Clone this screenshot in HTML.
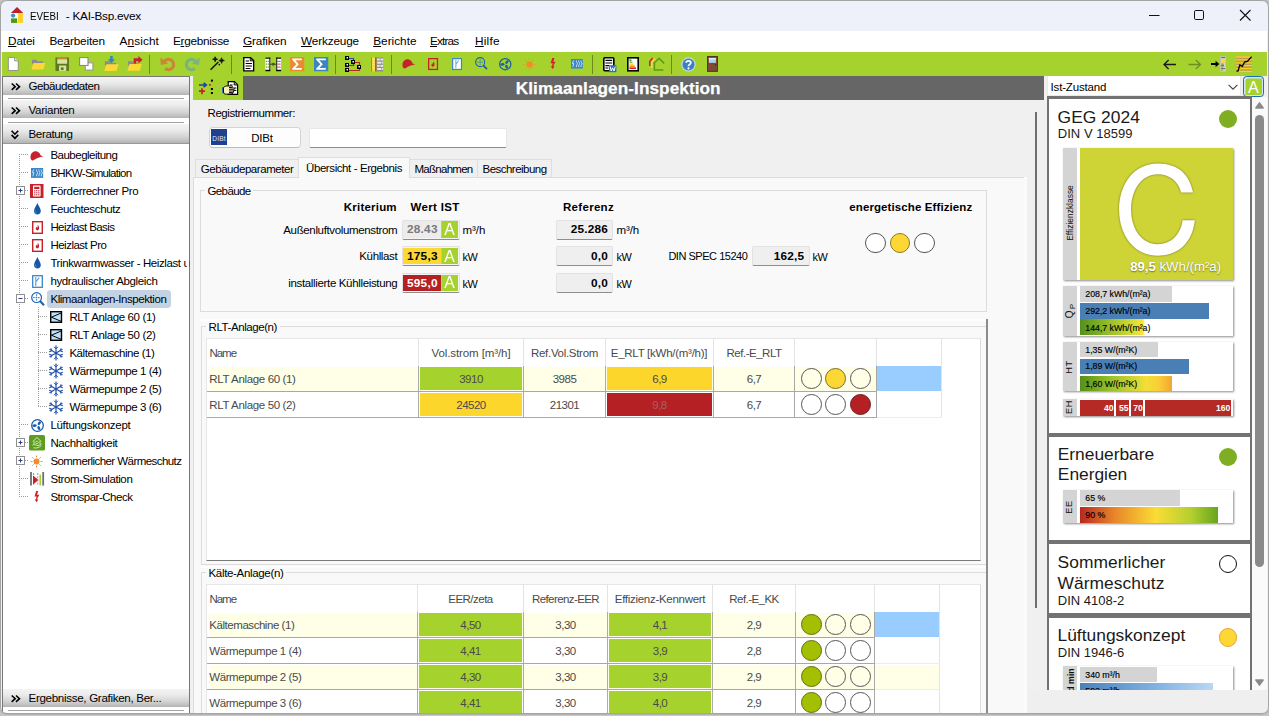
<!DOCTYPE html>
<html><head><meta charset="utf-8"><title>EVEBI - KAI-Bsp.evex</title>
<style>
*{box-sizing:border-box;margin:0;padding:0}
html,body{width:1269px;height:716px;overflow:hidden;background:#f0f0f0}
body{font-family:"Liberation Sans",sans-serif;font-size:11.5px;color:#000;position:relative}
.a{position:absolute}
.t{position:absolute;white-space:nowrap}
svg{overflow:visible}
</style></head>
<body>
<div class="a" style="left:0px;top:0px;width:1269px;height:31px;background:#eef1f9;"></div>
<svg class="a" style="left:0px;top:0px" width="30" height="30" viewBox="0 0 30 30"><path d="M10.9 13.1 L17.05 6.9 L23.2 13.1 Z" fill="#bf1f26"/><rect x="11" y="13" width="7" height="5.6" fill="#fff"/><rect x="18" y="13.1" width="5.1" height="9.8" fill="#fdd52a"/><rect x="11" y="18.4" width="6.1" height="4.5" fill="#4f9a0c"/><circle cx="13.1" cy="15.6" r="2.15" fill="#3f8dcc"/></svg>
<div class="t" style="left:30.40px;top:8.80px;font-size:11.8px;letter-spacing:0.000px;line-height:14px;height:14px;transform:scaleX(0.828);transform-origin:0 50%;">EVEBI</div>
<div class="t" style="left:65.80px;top:8.80px;font-size:11.8px;letter-spacing:-0.249px;line-height:14px;height:14px;">- KAI-Bsp.evex</div>
<svg class="a" style="left:1144px;top:5px" width="20" height="20" viewBox="0 0 20 20"><path d="M5 10.5 H15.5" stroke="#111" stroke-width="1" fill="none"/></svg>
<svg class="a" style="left:1189px;top:5px" width="20" height="20" viewBox="0 0 20 20"><rect x="5.5" y="5.5" width="9" height="9" rx="1.3" stroke="#111" stroke-width="1" fill="none"/></svg>
<svg class="a" style="left:1235px;top:5px" width="20" height="20" viewBox="0 0 20 20"><path d="M5 5 L15.5 15.5 M15.5 5 L5 15.5" stroke="#111" stroke-width="1.1" fill="none"/></svg>
<div class="a" style="left:0px;top:31px;width:1269px;height:21px;background:#fff;"></div>
<div class="t" style="left:8.00px;top:33.60px;font-size:11.8px;letter-spacing:-0.149px;line-height:14px;height:14px;"><span style="text-decoration:underline;text-underline-offset:0.6px;text-decoration-thickness:1px">D</span>atei</div>
<div class="t" style="left:49.40px;top:33.60px;font-size:11.8px;letter-spacing:-0.157px;line-height:14px;height:14px;">Be<span style="text-decoration:underline;text-underline-offset:0.6px;text-decoration-thickness:1px">a</span>rbeiten</div>
<div class="t" style="left:119.50px;top:33.60px;font-size:11.8px;letter-spacing:0.101px;line-height:14px;height:14px;">A<span style="text-decoration:underline;text-underline-offset:0.6px;text-decoration-thickness:1px">n</span>sicht</div>
<div class="t" style="left:173.00px;top:33.60px;font-size:11.8px;letter-spacing:-0.303px;line-height:14px;height:14px;">E<span style="text-decoration:underline;text-underline-offset:0.6px;text-decoration-thickness:1px">r</span>gebnisse</div>
<div class="t" style="left:243.00px;top:33.60px;font-size:11.8px;letter-spacing:-0.149px;line-height:14px;height:14px;"><span style="text-decoration:underline;text-underline-offset:0.6px;text-decoration-thickness:1px">G</span>rafiken</div>
<div class="t" style="left:301.00px;top:33.60px;font-size:11.8px;letter-spacing:-0.163px;line-height:14px;height:14px;"><span style="text-decoration:underline;text-underline-offset:0.6px;text-decoration-thickness:1px">W</span>erkzeuge</div>
<div class="t" style="left:373.20px;top:33.60px;font-size:11.8px;letter-spacing:0.002px;line-height:14px;height:14px;"><span style="text-decoration:underline;text-underline-offset:0.6px;text-decoration-thickness:1px">B</span>erichte</div>
<div class="t" style="left:430.00px;top:33.60px;font-size:11.8px;letter-spacing:-0.840px;line-height:14px;height:14px;"><span style="text-decoration:underline;text-underline-offset:0.6px;text-decoration-thickness:1px">E</span>xtras</div>
<div class="t" style="left:475.00px;top:33.60px;font-size:11.8px;letter-spacing:0.219px;line-height:14px;height:14px;"><span style="text-decoration:underline;text-underline-offset:0.6px;text-decoration-thickness:1px">H</span>ilfe</div>
<div class="a" style="left:2px;top:52px;width:1265px;height:24px;background:#a6d22e;"></div>
<div class="a" style="left:149px;top:55px;width:1px;height:19px;background:#6b8a1c;"></div>
<div class="a" style="left:231px;top:55px;width:1px;height:19px;background:#6b8a1c;"></div>
<div class="a" style="left:335px;top:55px;width:1px;height:19px;background:#6b8a1c;"></div>
<div class="a" style="left:391px;top:55px;width:1px;height:19px;background:#6b8a1c;"></div>
<div class="a" style="left:592px;top:55px;width:1px;height:19px;background:#6b8a1c;"></div>
<div class="a" style="left:671px;top:55px;width:1px;height:19px;background:#6b8a1c;"></div>
<svg class="a" style="left:7.3px;top:57px" width="16" height="16" viewBox="0 0 16 16"><g transform="scale(0.9,0.87)"><path d="M1.5 0.5 H8.5 L12.5 4.5 V15.5 H1.5 Z" fill="#fff" stroke="#8a8a8a" stroke-width="1"/><path d="M8.5 0.5 V4.5 H12.5" fill="#e8e8e8" stroke="#8a8a8a" stroke-width="1"/></g></svg>
<svg class="a" style="left:30.8px;top:57.2px" width="16" height="16" viewBox="0 0 16 16"><g transform="scale(0.92,0.92)"><path d="M1 3 H6 L7 4.5 H13 V8 H1 Z" fill="#8c8c8c"/><path d="M2.6 6.5 H15.6 L13.4 13.5 H0.4 Z" fill="#fdd835"/></g></svg>
<svg class="a" style="left:55px;top:57px" width="16" height="16" viewBox="0 0 16 16"><g transform="scale(0.9,0.9)"><rect x="0.5" y="0.5" width="15" height="15" fill="#5d7a22"/><rect x="2.5" y="0.5" width="11" height="2" fill="#c8873a"/><rect x="2.5" y="2.5" width="11" height="5" fill="#d5e59a"/><rect x="4.5" y="9.5" width="8" height="6" fill="#d5e59a"/><rect x="6.5" y="11.5" width="3" height="3" fill="#5d7a22"/></g></svg>
<svg class="a" style="left:79px;top:57px" width="16" height="16" viewBox="0 0 16 16"><g transform="scale(0.96,0.9)"><rect x="6.5" y="6.5" width="8" height="8" fill="#fff" stroke="#9a9a9a" stroke-width="1.2"/><rect x="0.6" y="0.6" width="8.8" height="8.8" fill="#fff" stroke="#8a8a8a" stroke-width="1.2"/></g></svg>
<svg class="a" style="left:104px;top:55.8px" width="16" height="16" viewBox="0 0 16 16"><g transform="scale(0.93,0.96)"><path d="M1 5.5 H6 L7 7 H13 V10 H1 Z" fill="#8c8c8c"/><path d="M2.6 8.5 H15.6 L13.4 15.5 H0.4 Z" fill="#fdd835"/><path d="M6.6 0 H9.4 V3.5 H11.8 L8 7.5 L4.2 3.5 H6.6 Z" fill="#2f86c8"/></g></svg>
<svg class="a" style="left:127.3px;top:56.2px" width="16" height="16" viewBox="0 0 16 16"><g transform="scale(0.95,0.95)"><path d="M1 5.5 H6 L7 7 H11 V10 H1 Z" fill="#8c8c8c"/><path d="M2.6 8.5 H15.6 L13.4 15.5 H0.4 Z" fill="#fdd835"/><path d="M7 2.4 H12 V0 L16.4 4 L12 8 V5.6 H9.5 V8 H7 Z" fill="#c5222b"/></g></svg>
<svg class="a" style="left:159.6px;top:55.4px" width="16" height="16" viewBox="0 0 16 16"><g transform="scale(1.0,1.0)"><path d="M3.6 7.6 A5.2 5.2 0 1 1 5.2 13.6" fill="none" stroke="#c8873a" stroke-width="3.2"/><path d="M0.3 2.6 L0.9 10 L8 8.6 Z" fill="#c8873a"/></g></svg>
<svg class="a" style="left:184.8px;top:55.4px" width="16" height="16" viewBox="0 0 16 16"><g transform="scale(1.0,1.0)"><path d="M11.4 7.6 A5.2 5.2 0 1 0 9.8 13.6" fill="none" stroke="#79b37e" stroke-width="3.2"/><path d="M14.7 2.6 L14.1 10 L7 8.6 Z" fill="#79b37e"/></g></svg>
<svg class="a" style="left:210px;top:56.2px" width="16" height="16" viewBox="0 0 16 16"><g transform="scale(0.95,0.95)"><path d="M0.6 14.6 L8.8 6.4" stroke="#111" stroke-width="1.5"/><path d="M5.4 0.7999999999999998 Q5.4 3.4 8.0 3.4 Q5.4 3.4 5.4 6.0 Q5.4 3.4 2.8000000000000003 3.4 Q5.4 3.4 5.4 0.7999999999999998 Z M12.2 1.9 Q12.2 4.8 15.1 4.8 Q12.2 4.8 12.2 7.699999999999999 Q12.2 4.8 9.299999999999999 4.8 Q12.2 4.8 12.2 1.9 Z" fill="#111" stroke="#111" stroke-width=".9" stroke-linejoin="round"/><circle cx="9.8" cy="9" r="0.9" fill="#111"/></g></svg>
<svg class="a" style="left:242.8px;top:56.7px" width="16" height="16" viewBox="0 0 16 16"><g transform="scale(0.95,0.89)"><path d="M0.8 0.8 H8 L11.2 4 V15.6 H0.8 Z" fill="#fff" stroke="#000" stroke-width="1.4"/><path d="M7.6 0.8 V4.4 H11.2 Z" fill="#777" stroke="#000" stroke-width=".8"/><path d="M2.8 4.6 H6.4 M2.8 7.4 H9.4 M2.8 10.2 H9.4 M2.8 13 H7.8" stroke="#000" stroke-width="1.1"/></g></svg>
<svg class="a" style="left:264.6px;top:56.6px" width="16" height="16" viewBox="0 0 16 16"><g transform="scale(0.96,0.88)"><rect x="0.4" y="0.6" width="5" height="15.4" fill="#fff"/><rect x="11.8" y="0.6" width="5" height="15.4" fill="#fff"/><path d="M0.4 1.3 H5.4 M0.4 15.3 H5.4 M11.8 1.3 H16.8 M11.8 15.3 H16.8" stroke="#000" stroke-width="1.6"/><path d="M5 0.6 V16 M12.2 0.6 V16" stroke="#000" stroke-width="1"/><path d="M1 5 H4.2 M1 8.2 H4.2 M1 11.4 H4.2" stroke="#6aa02c" stroke-width="1.4" stroke-dasharray="1.2 .7"/><path d="M13 5 H16.2 M13 8.2 H16.2 M13 11.4 H16.2" stroke="#c5222b" stroke-width="1.4" stroke-dasharray="1.2 .7"/><path d="M5.4 8.2 H11.8" stroke="#333" stroke-width="1"/><circle cx="8.6" cy="8.2" r="1.7" fill="#4a5a2a"/></g></svg>
<svg class="a" style="left:289.8px;top:56.7px" width="16" height="16" viewBox="0 0 16 16"><g transform="scale(0.92,0.92)"><rect x="0" y="0" width="15.5" height="15.5" fill="#ea8c2e"/><path d="M2.4 1.6 H12.8 V3.5 H5.8 L9.6 7.75 L5.8 12 H12.8 V13.9 H2.4 V12.5 L6.9 7.75 L2.4 3 Z" fill="#fff"/></g></svg>
<svg class="a" style="left:313.8px;top:56.7px" width="16" height="16" viewBox="0 0 16 16"><g transform="scale(0.92,0.92)"><rect x="0" y="0" width="15.5" height="15.5" fill="#3a86c4"/><path d="M2.4 1.6 H12.8 V3.5 H5.8 L9.6 7.75 L5.8 12 H12.8 V13.9 H2.4 V12.5 L6.9 7.75 L2.4 3 Z" fill="#fff"/></g></svg>
<svg class="a" style="left:345px;top:56px" width="16" height="16" viewBox="0 0 16 16"><g transform="scale(1,1)"><path d="M4 2.5 H8.5 V4 M4 9.5 H8.5 V8" fill="none" stroke="#1d4fa8" stroke-width="1.2"/><path d="M10 6.5 H14.5 V9 M4 14.5 H14.5 V13" fill="none" stroke="#c5222b" stroke-width="1.2"/><rect x="0" y="0" width="4" height="4" fill="#000"/><rect x="1.5" y="1" width="1.5" height="1.5" fill="#fff"/><rect x="6" y="4" width="4" height="4" fill="#000"/><rect x="7.5" y="5" width="1.5" height="1.5" fill="#fff"/><rect x="0" y="7" width="4" height="4" fill="#000"/><rect x="1.5" y="8" width="1.5" height="1.5" fill="#fff"/><rect x="12" y="9" width="4" height="4" fill="#000"/><rect x="13.5" y="10" width="1.5" height="1.5" fill="#fff"/><rect x="0" y="12" width="4" height="4" fill="#000"/><rect x="1.5" y="13" width="1.5" height="1.5" fill="#fff"/></g></svg>
<svg class="a" style="left:371px;top:56.7px" width="16" height="16" viewBox="0 0 16 16"><g transform="scale(0.87,0.93)"><rect x="0" y="0.5" width="1.3" height="15" fill="#8a8a8a"/><rect x="1.3" y="0.5" width="3.6" height="15" fill="#fdd835"/><path d="M1.3 2.5 H4.9 M1.3 5.5 H4.9 M1.3 8.5 H4.9 M1.3 11.5 H4.9" stroke="#f3ea9a" stroke-width="1"/><rect x="4.9" y="0.5" width="1.4" height="15" fill="#c5222b"/><rect x="6.3" y="0.5" width="7.7" height="15" fill="#8c8c8c"/><g fill="#e9e9e9"><rect x="7" y="1.6" width="3" height="2.2"/><rect x="10.8" y="1.6" width="3.2" height="2.2"/><rect x="7" y="5" width="5" height="2.2"/><rect x="12.8" y="5" width="1.2" height="2.2"/><rect x="7" y="8.4" width="3" height="2.2"/><rect x="10.8" y="8.4" width="3.2" height="2.2"/><rect x="7" y="11.8" width="5" height="2.2"/><rect x="12.8" y="11.8" width="1.2" height="2.2"/></g></g></svg>
<svg class="a" style="left:401.6px;top:57.6px" width="16" height="16" viewBox="0 0 16 16"><g transform="scale(0.83,0.83)"><path d="M0.6 9.2 C0.2 3.6 4.2 1 7.6 1.6 C10.8 2.2 12.2 4.6 12.6 6.6 L16 7.4 L11.8 8.6 C9 9.2 6.4 10.6 3.6 12.6 C1.8 12.6 0.8 11.2 0.6 9.2 Z" fill="#c5222b"/></g></svg>
<svg class="a" style="left:427.9px;top:57.8px" width="16" height="16" viewBox="0 0 16 16"><g transform="scale(0.92,0.93)"><rect x="0.7" y="0.7" width="9.6" height="11.6" fill="none" stroke="#c5222b" stroke-width="1.4"/><path d="M5.5 3.6 C7 5.2 7.4 6.4 7 7.8 C6.7 8.8 6.1 9.4 5.3 9.4 C4.1 9.4 3.5 8.3 3.8 7.1 C4 6.5 4.4 6.2 4.6 5.4 C5 5.9 5.2 6.3 5.2 6.9 C5.8 6.1 5.8 4.9 5.5 3.6 Z" fill="#c5222b"/></g></svg>
<svg class="a" style="left:452px;top:57.8px" width="16" height="16" viewBox="0 0 16 16"><g transform="scale(0.92,0.93)"><rect x="0.7" y="0.7" width="9.6" height="11.6" fill="#fff" stroke="#3a86c8" stroke-width="1.3"/><path d="M4.2 2 V11 M4.2 7 L7.2 2.6" fill="none" stroke="#6aa8dc" stroke-width="1.1"/></g></svg>
<svg class="a" style="left:474.8px;top:56.7px" width="16" height="16" viewBox="0 0 16 16"><g transform="scale(0.92,0.92)"><circle cx="5.6" cy="5.6" r="4.9" fill="none" stroke="#1d63b4" stroke-width="1.2"/><path d="M5.6 2.2 V9 M2.2 5.6 H9" stroke="#2f7ec4" stroke-width="1" stroke-dasharray="1.6 .8"/><path d="M9 9 L13 13.2" stroke="#1d5fb0" stroke-width="2"/></g></svg>
<svg class="a" style="left:498.6px;top:57.7px" width="16" height="16" viewBox="0 0 16 16"><g transform="scale(0.96,0.96)"><circle cx="6.5" cy="6.5" r="5.8" fill="none" stroke="#1a5cae" stroke-width="1.3"/><ellipse cx="9.4" cy="6.5" rx="2.1" ry="1.35" transform="rotate(-52 6.5 6.5)" fill="#1a5cae"/><ellipse cx="9.4" cy="6.5" rx="2.1" ry="1.35" transform="rotate(62 6.5 6.5)" fill="#1a5cae"/><ellipse cx="9.4" cy="6.5" rx="2.1" ry="1.35" transform="rotate(178 6.5 6.5)" fill="#1a5cae"/></g></svg>
<svg class="a" style="left:522.5px;top:58px" width="16" height="16" viewBox="0 0 16 16"><g transform="scale(1,1)"><circle cx="6.5" cy="6.5" r="3.2" fill="#f28c28"/><path d="M6.5 0.4 V2 M6.5 11 V12.6 M0.4 6.5 H2 M11 6.5 H12.6 M2.2 2.2 L3.3 3.3 M9.7 9.7 L10.8 10.8 M2.2 10.8 L3.3 9.7 M9.7 3.3 L10.8 2.2" stroke="#f28c28" stroke-width="1.1" stroke-dasharray="1 .5"/></g></svg>
<svg class="a" style="left:549.8px;top:58px" width="16" height="16" viewBox="0 0 16 16"><g transform="scale(0.9,0.87)"><path d="M2.6 0 L5 0 L3.6 4.2 L6.2 4.2 L3.4 9.4 L5.2 9.4 L3 12.6 L0.8 9.4 L2.2 9.4 L3 6 L0.6 6 Z" fill="#d0202a"/></g></svg>
<svg class="a" style="left:571px;top:59.2px" width="16" height="16" viewBox="0 0 16 16"><g transform="scale(0.875,0.87)"><rect x="0" y="0" width="13.5" height="11" fill="#3b86c6"/><path d="M3 1.6 L1.6 5.2 H3.2 L2 9.2 M6.2 1.6 V3 C6.2 4.2 7.4 4.2 7.4 5.4 C7.4 6.6 6.2 6.6 6.2 7.8 V9.2 M8.8 1.6 V3 C8.8 4.2 10 4.2 10 5.4 C10 6.6 8.8 6.6 8.8 7.8 V9.2 M11.4 1.6 V3 C11.4 4.2 12.6 4.2 12.6 5.4 C12.6 6.6 11.4 6.6 11.4 7.8 V9.2" fill="none" stroke="#dbeaf7" stroke-width="1"/></g></svg>
<svg class="a" style="left:603px;top:57px" width="16" height="16" viewBox="0 0 16 16"><g transform="scale(1,1)"><rect x="0.8" y="0.8" width="10" height="13" rx="1" fill="#fff" stroke="#000" stroke-width="1.6"/><path d="M2.4 3.4 H9.2 M2.4 6 H9.2 M2.4 8.6 H6 M2.4 11 H5.4" stroke="#000" stroke-width="1.1"/><rect x="6" y="8.2" width="7.4" height="7" fill="#2f6fc0"/><path d="M7.2 9.6 L8.2 14 L9.6 10.8 L11 14 L12.2 9.6" fill="none" stroke="#fff" stroke-width="1"/></g></svg>
<svg class="a" style="left:626.5px;top:57px" width="16" height="16" viewBox="0 0 16 16"><g transform="scale(1,1)"><rect x="0.8" y="0.8" width="10.4" height="13" fill="#fff" stroke="#000" stroke-width="1.6"/><path d="M2.4 3.2 H4.4" stroke="#3a9a3a" stroke-width="1.6"/><path d="M2.4 5.2 H5.4" stroke="#7cc03c" stroke-width="1.6"/><path d="M2.4 7.2 H6.6" stroke="#fdd835" stroke-width="1.6"/><path d="M2.4 9.2 H7.8" stroke="#f28c28" stroke-width="1.6"/><path d="M2.4 11.2 H9" stroke="#d0202a" stroke-width="1.6"/></g></svg>
<svg class="a" style="left:648.5px;top:57px" width="16" height="16" viewBox="0 0 16 16"><g transform="scale(1,1)"><path d="M3.6 1 L0.8 4.4 V9" fill="none" stroke="#d0202a" stroke-width="1.5"/><path d="M6 1.6 L2.8 5.2 V11" fill="none" stroke="#fdd835" stroke-width="1.6"/><path d="M4.4 6.8 L10 1.2 L15.2 6.4 M5.4 6 V13 H14.4" fill="none" stroke="#5a9a1c" stroke-width="1.5"/></g></svg>
<svg class="a" style="left:681px;top:56.5px" width="16" height="16" viewBox="0 0 16 16"><g transform="scale(1,1)"><circle cx="7.5" cy="7.5" r="7.2" fill="#c9d6e4"/><circle cx="7.5" cy="7.5" r="6" fill="#3a80c2"/><path d="M5.2 5.8 C5.2 3.2 9.8 3.2 9.8 5.8 C9.8 7.4 7.5 7.4 7.5 9.2" fill="none" stroke="#fff" stroke-width="1.8"/><circle cx="7.5" cy="11.4" r="1.1" fill="#fff"/></g></svg>
<svg class="a" style="left:706.8px;top:56px" width="16" height="16" viewBox="0 0 16 16"><g transform="scale(0.94,0.98)"><rect x="0" y="0" width="11.5" height="16" fill="#7d4a38"/><rect x="0.4" y="0.4" width="10.7" height="15.2" fill="none" stroke="#4a2a20" stroke-width=".8"/><rect x="2" y="2" width="7.5" height="5" fill="#a8d4f0"/><rect x="2" y="2" width="7.5" height="1.6" fill="#d9ecf9"/><path d="M8.4 9 H10" stroke="#222" stroke-width="1"/></g></svg>
<svg class="a" style="left:1162.5px;top:58.5px" width="16" height="16" viewBox="0 0 16 16"><g transform="scale(1,1)"><path d="M13 5.5 H1.4 M5.6 1 L1 5.5 L5.6 10" fill="none" stroke="#1a1a1a" stroke-width="1.3"/></g></svg>
<svg class="a" style="left:1187.5px;top:58.5px" width="16" height="16" viewBox="0 0 16 16"><g transform="scale(1,1)"><path d="M0.5 5.5 H12.1 M7.9 1 L12.5 5.5 L7.9 10" fill="none" stroke="#6d8f22" stroke-width="1.3"/></g></svg>
<svg class="a" style="left:1211px;top:56px" width="16" height="16" viewBox="0 0 16 16"><g transform="scale(1,1)"><path d="M0 7 H4.6 V4.8 L8.2 8 L4.6 11.2 V9 H0 Z" fill="#000"/><rect x="9.4" y="0.4" width="5.4" height="15.2" fill="#d4d4d4" stroke="#bdbdbd" stroke-width=".6"/><path d="M10.2 1.6 H14" stroke="#444" stroke-width=".8"/><rect x="10.1" y="3" width="4" height="3.6" fill="#fdd835"/><rect x="10.1" y="7.4" width="2.8" height="1.6" fill="#7cc03c"/><rect x="10.1" y="9.2" width="2.8" height="1.2" fill="#d0202a"/><rect x="10.1" y="10.6" width="2" height="1.2" fill="#7cc03c"/><path d="M10.2 12.6 H14" stroke="#444" stroke-width=".8"/><rect x="10.1" y="13.4" width="2" height="1.4" fill="#7cc03c"/></g></svg>
<svg class="a" style="left:1236px;top:56px" width="16" height="16" viewBox="0 0 16 16"><g transform="scale(1,1)"><rect x="0" y="0" width="16" height="16" fill="#b59e58"/><path d="M0 1 H16 M0 3.9 H16 M0 6.8 H16 M0 9.7 H16 M0 12.6 H16 M0 15.3 H16" stroke="#fdd218" stroke-width="1.3"/><path d="M0.4 15.2 H2 L3.8 9 L6.4 10.4 L8.6 6 L11.6 5.2 L15.6 0.6" fill="none" stroke="#000" stroke-width="1.3"/></g></svg>
<div class="a" style="left:1267px;top:31px;width:2px;height:685px;background:#f2f2f2;"></div>
<div class="a" style="left:2px;top:76px;width:188px;height:637.5px;background:#fff;border:1px solid #787878;"></div>
<div class="a" style="left:3px;top:77px;width:186px;height:17.6px;background:linear-gradient(#f4f4f4 0%,#ececec 30%,#d2d2d2 70%,#b4b4b4 100%);"></div>
<svg class="a" style="left:10.8px;top:82.9px" width="9.5" height="8" viewBox="0 0 9.5 8"><path d="M0.7 0.5 L4.2 3.7 L0.7 6.9 M5 0.5 L8.5 3.7 L5 6.9" fill="none" stroke="#000" stroke-width="1.6"/></svg>
<div class="t" style="left:28.50px;top:79.20px;font-size:11.6px;letter-spacing:-0.479px;line-height:14px;height:14px;">Gebäudedaten</div>
<div class="a" style="left:8px;top:98px;width:176px;height:1px;background:#a2a2a2;"></div>
<div class="a" style="left:3px;top:100.4px;width:186px;height:18px;background:linear-gradient(#f4f4f4 0%,#ececec 30%,#d2d2d2 70%,#b4b4b4 100%);"></div>
<svg class="a" style="left:10.8px;top:106.9px" width="9.5" height="8" viewBox="0 0 9.5 8"><path d="M0.7 0.5 L4.2 3.7 L0.7 6.9 M5 0.5 L8.5 3.7 L5 6.9" fill="none" stroke="#000" stroke-width="1.6"/></svg>
<div class="t" style="left:28.50px;top:103.20px;font-size:11.6px;letter-spacing:-0.310px;line-height:14px;height:14px;">Varianten</div>
<div class="a" style="left:8px;top:122px;width:176px;height:1px;background:#a2a2a2;"></div>
<div class="a" style="left:3px;top:124.4px;width:186px;height:19px;background:linear-gradient(#f4f4f4 0%,#ececec 30%,#d2d2d2 70%,#b4b4b4 100%);"></div>
<svg class="a" style="left:11.3px;top:130.0px" width="8" height="9.5" viewBox="0 0 8 9.5"><path d="M0.6 0.7 L3.9 4.2 L7.2 0.7 M0.6 4.9 L3.9 8.4 L7.2 4.9" fill="none" stroke="#000" stroke-width="1.6"/></svg>
<div class="t" style="left:28.50px;top:127.20px;font-size:11.6px;letter-spacing:-0.385px;line-height:14px;height:14px;">Beratung</div>
<div class="a" style="left:3px;top:143px;width:186px;height:1px;background:#989898;"></div>
<div class="a" style="left:3px;top:688.6px;width:186px;height:18.4px;background:linear-gradient(#f4f4f4 0%,#ececec 30%,#d2d2d2 70%,#b4b4b4 100%);"></div>
<svg class="a" style="left:10.8px;top:694.7px" width="9.5" height="8" viewBox="0 0 9.5 8"><path d="M0.7 0.5 L4.2 3.7 L0.7 6.9 M5 0.5 L8.5 3.7 L5 6.9" fill="none" stroke="#000" stroke-width="1.6"/></svg>
<div class="t" style="left:28.50px;top:691.00px;font-size:11.6px;letter-spacing:-0.316px;line-height:14px;height:14px;">Ergebnisse, Grafiken, Ber...</div>
<div class="a" style="left:8px;top:710px;width:176px;height:1px;background:#a2a2a2;"></div>
<div class="a" style="left:47px;top:290px;width:124px;height:18px;background:#c4d3e3;border-radius:3.5px;"></div>
<div class="a" style="left:19px;top:154px;width:1px;height:343px;background:repeating-linear-gradient(180deg,#9a9a9a 0 1px,transparent 1px 2px);"></div>
<div class="a" style="left:19px;top:154px;width:10px;height:1px;background:repeating-linear-gradient(90deg,#9a9a9a 0 1px,transparent 1px 2px);"></div>
<div class="a" style="left:19px;top:172px;width:10px;height:1px;background:repeating-linear-gradient(90deg,#9a9a9a 0 1px,transparent 1px 2px);"></div>
<div class="a" style="left:19px;top:190px;width:10px;height:1px;background:repeating-linear-gradient(90deg,#9a9a9a 0 1px,transparent 1px 2px);"></div>
<div class="a" style="left:19px;top:208px;width:10px;height:1px;background:repeating-linear-gradient(90deg,#9a9a9a 0 1px,transparent 1px 2px);"></div>
<div class="a" style="left:19px;top:226px;width:10px;height:1px;background:repeating-linear-gradient(90deg,#9a9a9a 0 1px,transparent 1px 2px);"></div>
<div class="a" style="left:19px;top:244px;width:10px;height:1px;background:repeating-linear-gradient(90deg,#9a9a9a 0 1px,transparent 1px 2px);"></div>
<div class="a" style="left:19px;top:262px;width:10px;height:1px;background:repeating-linear-gradient(90deg,#9a9a9a 0 1px,transparent 1px 2px);"></div>
<div class="a" style="left:19px;top:280px;width:10px;height:1px;background:repeating-linear-gradient(90deg,#9a9a9a 0 1px,transparent 1px 2px);"></div>
<div class="a" style="left:19px;top:298px;width:10px;height:1px;background:repeating-linear-gradient(90deg,#9a9a9a 0 1px,transparent 1px 2px);"></div>
<div class="a" style="left:38px;top:316px;width:10px;height:1px;background:repeating-linear-gradient(90deg,#9a9a9a 0 1px,transparent 1px 2px);"></div>
<div class="a" style="left:38px;top:334px;width:10px;height:1px;background:repeating-linear-gradient(90deg,#9a9a9a 0 1px,transparent 1px 2px);"></div>
<div class="a" style="left:38px;top:352px;width:10px;height:1px;background:repeating-linear-gradient(90deg,#9a9a9a 0 1px,transparent 1px 2px);"></div>
<div class="a" style="left:38px;top:370px;width:10px;height:1px;background:repeating-linear-gradient(90deg,#9a9a9a 0 1px,transparent 1px 2px);"></div>
<div class="a" style="left:38px;top:388px;width:10px;height:1px;background:repeating-linear-gradient(90deg,#9a9a9a 0 1px,transparent 1px 2px);"></div>
<div class="a" style="left:38px;top:406px;width:10px;height:1px;background:repeating-linear-gradient(90deg,#9a9a9a 0 1px,transparent 1px 2px);"></div>
<div class="a" style="left:19px;top:424px;width:10px;height:1px;background:repeating-linear-gradient(90deg,#9a9a9a 0 1px,transparent 1px 2px);"></div>
<div class="a" style="left:19px;top:442px;width:10px;height:1px;background:repeating-linear-gradient(90deg,#9a9a9a 0 1px,transparent 1px 2px);"></div>
<div class="a" style="left:19px;top:460px;width:10px;height:1px;background:repeating-linear-gradient(90deg,#9a9a9a 0 1px,transparent 1px 2px);"></div>
<div class="a" style="left:19px;top:478px;width:10px;height:1px;background:repeating-linear-gradient(90deg,#9a9a9a 0 1px,transparent 1px 2px);"></div>
<div class="a" style="left:19px;top:496px;width:10px;height:1px;background:repeating-linear-gradient(90deg,#9a9a9a 0 1px,transparent 1px 2px);"></div>
<div class="a" style="left:38px;top:307px;width:1px;height:100px;background:repeating-linear-gradient(180deg,#9a9a9a 0 1px,transparent 1px 2px);"></div>
<svg class="a" style="left:29.6px;top:149.6px" width="16" height="16" viewBox="0 0 16 16"><g transform="scale(0.84)"><path d="M0.6 9.2 C0.2 3.6 4.2 1 7.6 1.6 C10.8 2.2 12.2 4.6 12.6 6.6 L16 7.4 L11.8 8.6 C9 9.2 6.4 10.6 3.6 12.6 C1.8 12.6 0.8 11.2 0.6 9.2 Z" fill="#c5222b"/></g></svg>
<div class="t" style="left:50.40px;top:148.30px;font-size:11.5px;letter-spacing:-0.502px;line-height:14px;height:14px;">Baubegleitung</div>
<svg class="a" style="left:31px;top:167.5px" width="16" height="16" viewBox="0 0 16 16"><g transform="scale(0.9)"><rect x="0" y="0" width="13.5" height="11" fill="#3b86c6"/><path d="M3 1.6 L1.6 5.2 H3.2 L2 9.2 M6.2 1.6 V3 C6.2 4.2 7.4 4.2 7.4 5.4 C7.4 6.6 6.2 6.6 6.2 7.8 V9.2 M8.8 1.6 V3 C8.8 4.2 10 4.2 10 5.4 C10 6.6 8.8 6.6 8.8 7.8 V9.2 M11.4 1.6 V3 C11.4 4.2 12.6 4.2 12.6 5.4 C12.6 6.6 11.4 6.6 11.4 7.8 V9.2" fill="none" stroke="#dbeaf7" stroke-width="1"/></g></svg>
<div class="t" style="left:50.40px;top:166.30px;font-size:11.5px;letter-spacing:-0.721px;line-height:14px;height:14px;">BHKW-Simulation</div>
<svg class="a" style="left:29.5px;top:184px" width="16" height="16" viewBox="0 0 16 16"><rect x="0" y="0" width="13.5" height="14" fill="#c5222b"/><rect x="3" y="1.6" width="7.6" height="11" rx="0.8" fill="#fff"/><rect x="4.2" y="2.8" width="5.2" height="2.2" fill="#c5222b"/><g fill="#c5222b"><rect x="4.2" y="6.2" width="1.2" height="1.2"/><rect x="6.2" y="6.2" width="1.2" height="1.2"/><rect x="8.2" y="6.2" width="1.2" height="1.2"/><rect x="4.2" y="8.2" width="1.2" height="1.2"/><rect x="6.2" y="8.2" width="1.2" height="1.2"/><rect x="8.2" y="8.2" width="1.2" height="1.2"/><rect x="4.2" y="10.2" width="1.2" height="1.2"/><rect x="6.2" y="10.2" width="1.2" height="1.2"/><rect x="8.2" y="10.2" width="1.2" height="1.2"/></g></svg>
<div class="t" style="left:50.40px;top:184.30px;font-size:11.5px;letter-spacing:-0.350px;line-height:14px;height:14px;">Förderrechner Pro</div>
<svg class="a" style="left:33.6px;top:203.4px" width="16" height="16" viewBox="0 0 16 16"><path d="M3.4 0 C4.4 2.8 6.8 5 6.8 8 C6.8 10.2 5.3 11.6 3.4 11.6 C1.5 11.6 0 10.2 0 8 C0 5 2.4 2.8 3.4 0 Z" fill="#1558a8"/><path d="M1.4 7.4 C1.2 8.8 1.8 9.8 2.8 10.2" fill="none" stroke="#5a9ad8" stroke-width=".8"/></svg>
<div class="t" style="left:50.40px;top:202.30px;font-size:11.5px;letter-spacing:-0.368px;line-height:14px;height:14px;">Feuchteschutz</div>
<svg class="a" style="left:32px;top:221px" width="16" height="16" viewBox="0 0 16 16"><rect x="0.7" y="0.7" width="9.6" height="11.6" fill="#fff"/><rect x="0.7" y="0.7" width="9.6" height="11.6" fill="none" stroke="#c5222b" stroke-width="1.4"/><path d="M5.5 3.6 C7 5.2 7.4 6.4 7 7.8 C6.7 8.8 6.1 9.4 5.3 9.4 C4.1 9.4 3.5 8.3 3.8 7.1 C4 6.5 4.4 6.2 4.6 5.4 C5 5.9 5.2 6.3 5.2 6.9 C5.8 6.1 5.8 4.9 5.5 3.6 Z" fill="#c5222b"/></svg>
<div class="t" style="left:50.40px;top:220.30px;font-size:11.5px;letter-spacing:-0.587px;line-height:14px;height:14px;">Heizlast Basis</div>
<svg class="a" style="left:32px;top:239px" width="16" height="16" viewBox="0 0 16 16"><rect x="0.7" y="0.7" width="9.6" height="11.6" fill="#fff"/><rect x="0.7" y="0.7" width="9.6" height="11.6" fill="none" stroke="#c5222b" stroke-width="1.4"/><path d="M5.5 3.6 C7 5.2 7.4 6.4 7 7.8 C6.7 8.8 6.1 9.4 5.3 9.4 C4.1 9.4 3.5 8.3 3.8 7.1 C4 6.5 4.4 6.2 4.6 5.4 C5 5.9 5.2 6.3 5.2 6.9 C5.8 6.1 5.8 4.9 5.5 3.6 Z" fill="#c5222b"/></svg>
<div class="t" style="left:50.40px;top:238.30px;font-size:11.5px;letter-spacing:-0.499px;line-height:14px;height:14px;">Heizlast Pro</div>
<svg class="a" style="left:33.6px;top:257.4px" width="16" height="16" viewBox="0 0 16 16"><path d="M3.4 0 C4.4 2.8 6.8 5 6.8 8 C6.8 10.2 5.3 11.6 3.4 11.6 C1.5 11.6 0 10.2 0 8 C0 5 2.4 2.8 3.4 0 Z" fill="#1558a8"/><path d="M1.4 7.4 C1.2 8.8 1.8 9.8 2.8 10.2" fill="none" stroke="#5a9ad8" stroke-width=".8"/></svg>
<div class="t" style="left:50.40px;top:256.30px;font-size:11.5px;letter-spacing:-0.406px;line-height:14px;height:14px;">Trinkwarmwasser - Heizlast u</div>
<svg class="a" style="left:32px;top:275px" width="16" height="16" viewBox="0 0 16 16"><rect x="0.7" y="0.7" width="9.6" height="11.6" fill="#fff" stroke="#3a86c8" stroke-width="1.3"/><path d="M3.8 2 V11 M3.8 7 L7.2 2.6" fill="none" stroke="#5a9ad8" stroke-width="1.1"/></svg>
<div class="t" style="left:50.40px;top:274.30px;font-size:11.5px;letter-spacing:-0.366px;line-height:14px;height:14px;">hydraulischer Abgleich</div>
<svg class="a" style="left:30.5px;top:292px" width="16" height="16" viewBox="0 0 16 16"><circle cx="5.6" cy="5.6" r="4.9" fill="none" stroke="#1d63b4" stroke-width="1.2"/><path d="M5.6 2.2 V9 M2.2 5.6 H9" stroke="#2f7ec4" stroke-width="1" stroke-dasharray="1.6 .8"/><path d="M9 9 L13 13.2" stroke="#1d5fb0" stroke-width="2"/></svg>
<div class="t" style="left:50.40px;top:292.30px;font-size:11.5px;letter-spacing:-0.432px;line-height:14px;height:14px;">Klimaanlagen-Inspektion</div>
<svg class="a" style="left:50px;top:311px" width="16" height="16" viewBox="0 0 16 16"><rect x="0.7" y="0.7" width="10.8" height="10.6" fill="#bfe0f8" stroke="#000" stroke-width="1.4"/><path d="M11.2 2 L1.4 6.2 L11.2 10.4" fill="none" stroke="#000" stroke-width="1"/></svg>
<div class="t" style="left:69.40px;top:310.30px;font-size:11.5px;letter-spacing:-0.368px;line-height:14px;height:14px;">RLT Anlage 60 (1)</div>
<svg class="a" style="left:50px;top:329px" width="16" height="16" viewBox="0 0 16 16"><rect x="0.7" y="0.7" width="10.8" height="10.6" fill="#bfe0f8" stroke="#000" stroke-width="1.4"/><path d="M11.2 2 L1.4 6.2 L11.2 10.4" fill="none" stroke="#000" stroke-width="1"/></svg>
<div class="t" style="left:69.40px;top:328.30px;font-size:11.5px;letter-spacing:-0.368px;line-height:14px;height:14px;">RLT Anlage 50 (2)</div>
<svg class="a" style="left:49px;top:346.0px" width="16" height="16" viewBox="0 0 16 16"><g stroke="#1d4fa8" stroke-width="1.05" fill="none" transform="translate(-0.7,-0.7) scale(1.1)"><path d="M7 0.2 V13.8 M1.1 3.6 L12.9 10.4 M1.1 10.4 L12.9 3.6"/><path d="M5.2 1.4 L7 3.2 L8.8 1.4 M5.2 12.6 L7 10.8 L8.8 12.6 M0.6 5.9 L3.1 5.2 L2.4 2.7 M13.4 8.1 L10.9 8.8 L11.6 11.3 M0.6 8.1 L3.1 8.8 L2.4 11.3 M13.4 5.9 L10.9 5.2 L11.6 2.7" stroke-width=".9"/></g></svg>
<div class="t" style="left:69.40px;top:346.30px;font-size:11.5px;letter-spacing:-0.451px;line-height:14px;height:14px;">Kältemaschine (1)</div>
<svg class="a" style="left:49px;top:364.0px" width="16" height="16" viewBox="0 0 16 16"><g stroke="#1d4fa8" stroke-width="1.05" fill="none" transform="translate(-0.7,-0.7) scale(1.1)"><path d="M7 0.2 V13.8 M1.1 3.6 L12.9 10.4 M1.1 10.4 L12.9 3.6"/><path d="M5.2 1.4 L7 3.2 L8.8 1.4 M5.2 12.6 L7 10.8 L8.8 12.6 M0.6 5.9 L3.1 5.2 L2.4 2.7 M13.4 8.1 L10.9 8.8 L11.6 11.3 M0.6 8.1 L3.1 8.8 L2.4 11.3 M13.4 5.9 L10.9 5.2 L11.6 2.7" stroke-width=".9"/></g></svg>
<div class="t" style="left:69.40px;top:364.30px;font-size:11.5px;letter-spacing:-0.441px;line-height:14px;height:14px;">Wärmepumpe 1 (4)</div>
<svg class="a" style="left:49px;top:382.0px" width="16" height="16" viewBox="0 0 16 16"><g stroke="#1d4fa8" stroke-width="1.05" fill="none" transform="translate(-0.7,-0.7) scale(1.1)"><path d="M7 0.2 V13.8 M1.1 3.6 L12.9 10.4 M1.1 10.4 L12.9 3.6"/><path d="M5.2 1.4 L7 3.2 L8.8 1.4 M5.2 12.6 L7 10.8 L8.8 12.6 M0.6 5.9 L3.1 5.2 L2.4 2.7 M13.4 8.1 L10.9 8.8 L11.6 11.3 M0.6 8.1 L3.1 8.8 L2.4 11.3 M13.4 5.9 L10.9 5.2 L11.6 2.7" stroke-width=".9"/></g></svg>
<div class="t" style="left:69.40px;top:382.30px;font-size:11.5px;letter-spacing:-0.441px;line-height:14px;height:14px;">Wärmepumpe 2 (5)</div>
<svg class="a" style="left:49px;top:400.0px" width="16" height="16" viewBox="0 0 16 16"><g stroke="#1d4fa8" stroke-width="1.05" fill="none" transform="translate(-0.7,-0.7) scale(1.1)"><path d="M7 0.2 V13.8 M1.1 3.6 L12.9 10.4 M1.1 10.4 L12.9 3.6"/><path d="M5.2 1.4 L7 3.2 L8.8 1.4 M5.2 12.6 L7 10.8 L8.8 12.6 M0.6 5.9 L3.1 5.2 L2.4 2.7 M13.4 8.1 L10.9 8.8 L11.6 11.3 M0.6 8.1 L3.1 8.8 L2.4 11.3 M13.4 5.9 L10.9 5.2 L11.6 2.7" stroke-width=".9"/></g></svg>
<div class="t" style="left:69.40px;top:400.30px;font-size:11.5px;letter-spacing:-0.441px;line-height:14px;height:14px;">Wärmepumpe 3 (6)</div>
<svg class="a" style="left:30.5px;top:418.5px" width="16" height="16" viewBox="0 0 16 16"><circle cx="6.5" cy="6.5" r="5.8" fill="none" stroke="#1a5cae" stroke-width="1.3"/><ellipse cx="9.4" cy="6.5" rx="2.1" ry="1.35" transform="rotate(-52 6.5 6.5)" fill="#1a5cae"/><ellipse cx="9.4" cy="6.5" rx="2.1" ry="1.35" transform="rotate(62 6.5 6.5)" fill="#1a5cae"/><ellipse cx="9.4" cy="6.5" rx="2.1" ry="1.35" transform="rotate(178 6.5 6.5)" fill="#1a5cae"/></svg>
<div class="t" style="left:50.40px;top:418.30px;font-size:11.5px;letter-spacing:-0.293px;line-height:14px;height:14px;">Lüftungskonzept</div>
<svg class="a" style="left:28.9px;top:435px" width="16" height="16" viewBox="0 0 16 16"><rect x="0" y="0" width="16" height="15.6" rx="1.6" fill="#5c9c1e"/><path d="M4 6.4 L8 2.4 L12 6.4 M5 5.8 V9.6 M11 5.8 V9.2" fill="none" stroke="#dff0c8" stroke-width=".9"/><path d="M3.4 10.2 C5 9.2 6.6 9.6 8 10.4 C9.4 11 10.6 10 12.6 8.8 M4.4 12.8 C6.4 13.4 9.6 13 12.4 10.6" fill="none" stroke="#dff0c8" stroke-width=".9"/><circle cx="8" cy="7.4" r="1.3" fill="none" stroke="#dff0c8" stroke-width=".7"/></svg>
<div class="t" style="left:50.40px;top:436.30px;font-size:11.5px;letter-spacing:-0.374px;line-height:14px;height:14px;">Nachhaltigkeit</div>
<svg class="a" style="left:30px;top:454.9px" width="16" height="16" viewBox="0 0 16 16"><circle cx="6.5" cy="6.5" r="3" fill="#f28c28"/><path d="M6.5 0.6 V2.4 M6.5 10.6 V12.4 M0.6 6.5 H2.4 M10.6 6.5 H12.4 M2.3 2.3 L3.6 3.6 M9.4 9.4 L10.7 10.7 M2.3 10.7 L3.6 9.4 M9.4 3.6 L10.7 2.3" stroke="#f28c28" stroke-width="1"/></svg>
<div class="t" style="left:50.40px;top:454.30px;font-size:11.5px;letter-spacing:-0.559px;line-height:14px;height:14px;">Sommerlicher Wärmeschutz</div>
<svg class="a" style="left:29.8px;top:472.3px" width="16" height="16" viewBox="0 0 16 16"><path d="M1 0 V13.6" stroke="#6e6e6e" stroke-width="1.8"/><path d="M3.6 1 V13.6" stroke="#9a9a9a" stroke-width="1.1" stroke-dasharray="2 1.2"/><path d="M3 3.6 L8.6 8 L3 12.4 Z" fill="#c5222b"/><path d="M7.8 1 V13.6" stroke="#9a9a9a" stroke-width="1" stroke-dasharray="2 1.2"/><path d="M10.2 2.4 V13.6" stroke="#a6d22e" stroke-width="1.6"/><path d="M13.2 0 V13.6" stroke="#6e6e6e" stroke-width="1.8"/></svg>
<div class="t" style="left:50.40px;top:472.30px;font-size:11.5px;letter-spacing:-0.387px;line-height:14px;height:14px;">Strom-Simulation</div>
<svg class="a" style="left:34.2px;top:491.4px" width="16" height="16" viewBox="0 0 16 16"><g transform="scale(0.85,0.9)"><path d="M2.6 0 L5 0 L3.6 4.2 L6.2 4.2 L3.4 9.4 L5.2 9.4 L3 12.6 L0.8 9.4 L2.2 9.4 L3 6 L0.6 6 Z" fill="#d0202a"/></g></svg>
<div class="t" style="left:50.40px;top:490.30px;font-size:11.5px;letter-spacing:-0.498px;line-height:14px;height:14px;">Stromspar-Check</div>
<div class="a" style="left:187px;top:256px;width:2px;height:14px;background:#fff;"></div>
<svg class="a" style="left:16px;top:186px" width="9" height="9" viewBox="0 0 9 9"><rect x="0.5" y="0.5" width="8" height="8" fill="#fff" stroke="#8f8f8f" stroke-width="1"/><path d="M2.5 4.5 H6.5" stroke="#2a3f8f" stroke-width="1"/><path d="M4.5 2.5 V6.5" stroke="#2a3f8f" stroke-width="1"/></svg>
<svg class="a" style="left:16px;top:294px" width="9" height="9" viewBox="0 0 9 9"><rect x="0.5" y="0.5" width="8" height="8" fill="#fff" stroke="#8f8f8f" stroke-width="1"/><path d="M2.5 4.5 H6.5" stroke="#2a3f8f" stroke-width="1"/></svg>
<svg class="a" style="left:16px;top:438px" width="9" height="9" viewBox="0 0 9 9"><rect x="0.5" y="0.5" width="8" height="8" fill="#fff" stroke="#8f8f8f" stroke-width="1"/><path d="M2.5 4.5 H6.5" stroke="#2a3f8f" stroke-width="1"/><path d="M4.5 2.5 V6.5" stroke="#2a3f8f" stroke-width="1"/></svg>
<svg class="a" style="left:16px;top:456px" width="9" height="9" viewBox="0 0 9 9"><rect x="0.5" y="0.5" width="8" height="8" fill="#fff" stroke="#8f8f8f" stroke-width="1"/><path d="M2.5 4.5 H6.5" stroke="#2a3f8f" stroke-width="1"/><path d="M4.5 2.5 V6.5" stroke="#2a3f8f" stroke-width="1"/></svg>
<div class="a" style="left:193px;top:76px;width:50px;height:24px;background:#a6d22e;"></div>
<div class="a" style="left:243px;top:76px;width:801px;height:24px;background:#666666;"></div>
<div class="t" style="left:515.80px;top:78.00px;font-size:17.2px;letter-spacing:0.063px;line-height:20px;height:20px;font-weight:bold;color:#fff;-webkit-text-stroke:0.25px #fff;">Klimaanlagen-Inspektion</div>
<svg class="a" style="left:190px;top:74px" width="30" height="30" viewBox="0 0 30 30"><path d="M9 11 H16 M13.6 8.8 L16.4 11 L13.6 13.2" fill="none" stroke="#1d3fa8" stroke-width="1.5"/><path d="M9 17.1 H15 M12 14.2 V20.2" stroke="#c5222b" stroke-width="1.7"/><rect x="20.9" y="5.6" width="2" height="2" fill="#000"/><rect x="19" y="10" width="1.8" height="1.8" fill="#c5222b"/><rect x="20.9" y="14" width="2" height="2" fill="#000"/><rect x="20.9" y="18" width="2" height="2" fill="#000"/></svg>
<svg class="a" style="left:220px;top:78px" width="20" height="20" viewBox="0 0 20 20"><path d="M8.2 3.6 H14.4 L17.6 6.8 V16.4 H8.2 Z" fill="#fff" stroke="#000" stroke-width="1.2"/><path d="M14.2 3.8 V7 H17.4" fill="#999" stroke="#000" stroke-width=".9"/><path d="M10 7 H12.6 M14 10 H16.4 M14 12.4 H16.4" stroke="#000" stroke-width="1"/><path d="M2.6 9.4 L3 15.4" stroke="#2f6fc0" stroke-width="1.4"/><path d="M3.4 9.6 C4.4 8.4 6 8 7.4 8 L11.6 7.8 C12.6 8 12.6 9.2 11.6 9.4 L9 9.6 L13.8 10 C14.6 10.2 14.6 11.3 13.8 11.5 L13.8 13 L13.2 14.6 L12.4 15.8 L6.6 16.2 C5 16.2 4 15.6 3.6 15 Z" fill="#fdf0b8" stroke="#000" stroke-width="1"/><path d="M9 11.4 H13.6 M9 13 H13.4 M9 14.5 H12.8" stroke="#000" stroke-width=".9"/></svg>
<div class="t" style="left:207.50px;top:105.80px;font-size:11.5px;letter-spacing:-0.416px;line-height:14px;height:14px;">Registriernummer:</div>
<div class="a" style="left:209px;top:127px;width:91.5px;height:21px;background:#fdfdfd;border:1px solid #d4d4d4;border-bottom-color:#bcbcbc;border-radius:4px;"></div>
<div class="a" style="left:211px;top:129px;width:16px;height:16px;background:#1f3f8f;"></div>
<div class="t" style="left:212.25px;top:135.00px;font-size:6.5px;letter-spacing:0.215px;line-height:8px;height:8px;color:#dfe6f5;">DIBt</div>
<div class="t" style="left:251.30px;top:131.30px;font-size:11.5px;letter-spacing:-0.241px;line-height:14px;height:14px;">DIBt</div>
<div class="a" style="left:308.5px;top:127.5px;width:198px;height:20.5px;background:#fff;border:1px solid #e6e6e6;border-bottom:1px solid #8c8c8c;border-radius:2px;"></div>
<div class="a" style="left:193px;top:177px;width:831px;height:539px;background:#f9f9f9;border-top:1px solid #dcdcdc;border-left:1px solid #dcdcdc;"></div>
<div class="a" style="left:1024px;top:177px;width:3px;height:539px;background:#fbfbfb;"></div>
<div class="a" style="left:195px;top:159px;width:104px;height:18.3px;background:#f0f0f0;border:1px solid #dedede;border-bottom:none;"></div>
<div class="t" style="left:200.75px;top:161.95px;font-size:11.5px;letter-spacing:-0.451px;line-height:14px;height:14px;">Gebäudeparameter</div>
<div class="a" style="left:409px;top:159px;width:69px;height:18.3px;background:#f0f0f0;border:1px solid #dedede;border-bottom:none;"></div>
<div class="t" style="left:414.50px;top:161.95px;font-size:11.5px;letter-spacing:-0.728px;line-height:14px;height:14px;">Maßnahmen</div>
<div class="a" style="left:477px;top:159px;width:75px;height:18.3px;background:#f0f0f0;border:1px solid #dedede;border-bottom:none;"></div>
<div class="t" style="left:482.50px;top:161.95px;font-size:11.5px;letter-spacing:-0.527px;line-height:14px;height:14px;">Beschreibung</div>
<div class="a" style="left:298px;top:157px;width:112px;height:21px;background:#f9f9f9;border:1px solid #dedede;border-bottom:none;"></div>
<div class="t" style="left:306.00px;top:160.90px;font-size:11.5px;letter-spacing:-0.409px;line-height:14px;height:14px;">Übersicht - Ergebnis</div>
<div class="a" style="left:200px;top:190px;width:787px;height:122px;background:#f9f9f9;border:1px solid #dcdcdc;border-right:1px solid #dcdcdc;"></div>
<div class="a" style="left:205px;top:189px;width:48px;height:3px;background:#f9f9f9;"></div>
<div class="t" style="left:207.50px;top:183.90px;font-size:11.5px;letter-spacing:-0.616px;line-height:14px;height:14px;">Gebäude</div>
<div class="t" style="left:343.80px;top:200.20px;font-size:11.5px;letter-spacing:0.209px;line-height:14px;height:14px;font-weight:bold;">Kriterium</div>
<div class="t" style="left:410.50px;top:200.20px;font-size:11.5px;letter-spacing:0.321px;line-height:14px;height:14px;font-weight:bold;">Wert IST</div>
<div class="t" style="left:563.00px;top:200.20px;font-size:11.5px;letter-spacing:0.304px;line-height:14px;height:14px;font-weight:bold;">Referenz</div>
<div class="t" style="left:849.30px;top:200.20px;font-size:11.5px;letter-spacing:0.101px;line-height:14px;height:14px;font-weight:bold;">energetische Effizienz</div>
<div class="t" style="left:283.30px;top:222.60px;font-size:11.5px;letter-spacing:-0.354px;line-height:14px;height:14px;">Außenluftvolumenstrom</div>
<div class="a" style="left:402px;top:219.6px;width:57.5px;height:20px;background:#f4f4f4;border:1px solid #e2e2e2;border-bottom:1px solid #8e8e8e;border-radius:2px;"></div>
<div class="a" style="left:403.3px;top:221.1px;width:38.5px;height:16.5px;background:#ececec;"></div>
<div class="t" style="left:407.07px;top:222.20px;font-size:11.8px;letter-spacing:0.220px;line-height:14px;height:14px;font-weight:bold;color:#7a7a7a;">28.43</div>
<div class="a" style="left:441.3px;top:221.1px;width:17px;height:16.5px;background:#a6d22e;border-left:1px solid #9ec8e8;"></div>
<div class="t" style="left:444.46px;top:221.70px;font-size:16.6px;letter-spacing:0.000px;line-height:16px;height:16px;color:#fff;transform:scaleX(0.95);">A</div>
<div class="t" style="left:462.60px;top:223.00px;font-size:11.5px;letter-spacing:-0.100px;line-height:14px;height:14px;">m³/h</div>
<div class="a" style="left:555.8px;top:219.6px;width:57.7px;height:20px;background:#efefef;border:1px solid #e2e2e2;border-bottom:1px solid #8e8e8e;border-radius:2px;"></div>
<div class="t" style="left:570.71px;top:222.20px;font-size:11.8px;letter-spacing:0.200px;line-height:14px;height:14px;font-weight:bold;">25.286</div>
<div class="t" style="left:616.50px;top:223.00px;font-size:11.5px;letter-spacing:-0.100px;line-height:14px;height:14px;">m³/h</div>
<div class="t" style="left:359.30px;top:249.40px;font-size:11.5px;letter-spacing:-0.364px;line-height:14px;height:14px;">Kühllast</div>
<div class="a" style="left:402px;top:246.39999999999998px;width:57.5px;height:20px;background:#f4f4f4;border:1px solid #e2e2e2;border-bottom:1px solid #8e8e8e;border-radius:2px;"></div>
<div class="a" style="left:403.3px;top:247.89999999999998px;width:38.5px;height:16.5px;background:#fdd835;"></div>
<div class="t" style="left:407.07px;top:249.00px;font-size:11.8px;letter-spacing:0.220px;line-height:14px;height:14px;font-weight:bold;color:#000;">175,3</div>
<div class="a" style="left:441.3px;top:247.89999999999998px;width:17px;height:16.5px;background:#a6d22e;border-left:1px solid #9ec8e8;"></div>
<div class="t" style="left:444.46px;top:248.50px;font-size:16.6px;letter-spacing:0.000px;line-height:16px;height:16px;color:#fff;transform:scaleX(0.95);">A</div>
<div class="t" style="left:462.60px;top:249.80px;font-size:10.9px;letter-spacing:-0.569px;line-height:14px;height:14px;">kW</div>
<div class="a" style="left:555.8px;top:246.39999999999998px;width:57.7px;height:20px;background:#efefef;border:1px solid #e2e2e2;border-bottom:1px solid #8e8e8e;border-radius:2px;"></div>
<div class="t" style="left:591.00px;top:249.00px;font-size:11.8px;letter-spacing:0.200px;line-height:14px;height:14px;font-weight:bold;">0,0</div>
<div class="t" style="left:616.50px;top:249.80px;font-size:10.9px;letter-spacing:-0.569px;line-height:14px;height:14px;">kW</div>
<div class="t" style="left:288.30px;top:276.20px;font-size:11.5px;letter-spacing:-0.345px;line-height:14px;height:14px;">installierte Kühlleistung</div>
<div class="a" style="left:402px;top:273.2px;width:57.5px;height:20px;background:#f4f4f4;border:1px solid #e2e2e2;border-bottom:1px solid #8e8e8e;border-radius:2px;"></div>
<div class="a" style="left:403.3px;top:274.7px;width:38.5px;height:16.5px;background:#b52025;"></div>
<div class="t" style="left:407.07px;top:275.80px;font-size:11.8px;letter-spacing:0.220px;line-height:14px;height:14px;font-weight:bold;color:#fff;">595,0</div>
<div class="a" style="left:441.3px;top:274.7px;width:17px;height:16.5px;background:#a6d22e;border-left:1px solid #9ec8e8;"></div>
<div class="t" style="left:444.46px;top:275.30px;font-size:16.6px;letter-spacing:0.000px;line-height:16px;height:16px;color:#fff;transform:scaleX(0.95);">A</div>
<div class="t" style="left:462.60px;top:276.60px;font-size:10.9px;letter-spacing:-0.569px;line-height:14px;height:14px;">kW</div>
<div class="a" style="left:555.8px;top:273.2px;width:57.7px;height:20px;background:#efefef;border:1px solid #e2e2e2;border-bottom:1px solid #8e8e8e;border-radius:2px;"></div>
<div class="t" style="left:591.00px;top:275.80px;font-size:11.8px;letter-spacing:0.200px;line-height:14px;height:14px;font-weight:bold;">0,0</div>
<div class="t" style="left:616.50px;top:276.60px;font-size:10.9px;letter-spacing:-0.569px;line-height:14px;height:14px;">kW</div>
<div class="t" style="left:668.40px;top:248.80px;font-size:11px;letter-spacing:-0.471px;line-height:14px;height:14px;">DIN SPEC 15240</div>
<div class="a" style="left:752px;top:246.4px;width:57.7px;height:20px;background:#efefef;border:1px solid #e2e2e2;border-bottom:1px solid #8e8e8e;border-radius:2px;"></div>
<div class="t" style="left:773.67px;top:249.00px;font-size:11.8px;letter-spacing:0.200px;line-height:14px;height:14px;font-weight:bold;">162,5</div>
<div class="t" style="left:812.60px;top:249.80px;font-size:10.9px;letter-spacing:-0.569px;line-height:14px;height:14px;">kW</div>
<div class="a" style="left:864.90px;top:232.60px;width:20.80px;height:20.80px;border-radius:50%;background:#fff;border:1px solid #555"></div>
<div class="a" style="left:889.60px;top:232.60px;width:20.80px;height:20.80px;border-radius:50%;background:#fdd835;border:1px solid #8a7a2a"></div>
<div class="a" style="left:914.20px;top:232.60px;width:20.80px;height:20.80px;border-radius:50%;background:#fff;border:1px solid #555"></div>
<div class="a" style="left:200px;top:319px;width:786px;height:2px;background:#fefefe;"></div>
<div class="a" style="left:201px;top:326px;width:786px;height:239px;background:#f9f9f9;border:1px solid #dcdcdc;border-right:1px solid #8a8a8a;"></div>
<div class="a" style="left:206px;top:325px;width:73.5px;height:3px;background:#f9f9f9;"></div>
<div class="t" style="left:208.50px;top:319.90px;font-size:11.5px;letter-spacing:-0.417px;line-height:14px;height:14px;">RLT-Anlage(n)</div>
<div class="a" style="left:206px;top:338px;width:775px;height:223px;background:#fff;border:1px solid #e6e6e6;border-bottom:1px solid #7a7a7a;border-right:1px solid #dcdcdc;"></div>
<div class="t" style="left:209.50px;top:345.55px;font-size:11.5px;letter-spacing:-1.044px;line-height:14px;height:14px;color:#4a4a4a;">Name</div>
<div class="t" style="left:431.50px;top:345.55px;font-size:11.5px;letter-spacing:-0.095px;line-height:14px;height:14px;color:#4a4a4a;">Vol.strom [m³/h]</div>
<div class="t" style="left:531.00px;top:345.55px;font-size:11.5px;letter-spacing:-0.303px;line-height:14px;height:14px;color:#4a4a4a;">Ref.Vol.Strom</div>
<div class="t" style="left:610.75px;top:345.55px;font-size:11.5px;letter-spacing:-0.259px;line-height:14px;height:14px;color:#4a4a4a;">E_RLT [kWh/(m³/h)]</div>
<div class="t" style="left:726.50px;top:345.55px;font-size:11.5px;letter-spacing:-0.486px;line-height:14px;height:14px;color:#4a4a4a;">Ref.-E_RLT</div>
<div class="a" style="left:418px;top:338.5px;width:1px;height:79.5px;background:#e4e4e4;"></div>
<div class="a" style="left:523px;top:338.5px;width:1px;height:79.5px;background:#e4e4e4;"></div>
<div class="a" style="left:605px;top:338.5px;width:1px;height:79.5px;background:#e4e4e4;"></div>
<div class="a" style="left:713px;top:338.5px;width:1px;height:79.5px;background:#e4e4e4;"></div>
<div class="a" style="left:794px;top:338.5px;width:1px;height:79.5px;background:#e4e4e4;"></div>
<div class="a" style="left:876px;top:338.5px;width:1px;height:79.5px;background:#e4e4e4;"></div>
<div class="a" style="left:941px;top:338.5px;width:1px;height:79.5px;background:#e4e4e4;"></div>
<div class="a" style="left:208.6px;top:367.0px;width:732.4px;height:24px;background:#feffe6;"></div>
<div class="a" style="left:207px;top:391.0px;width:670px;height:1px;background:#a8a8a8;"></div>
<div class="t" style="left:209.30px;top:371.90px;font-size:11.5px;letter-spacing:-0.351px;line-height:14px;height:14px;color:#4a4a4a;">RLT Anlage 60 (1)</div>
<div class="a" style="left:420px;top:367.0px;width:102px;height:23px;background:#a6d22e;"></div>
<div class="t" style="left:459.21px;top:371.90px;font-size:11.5px;letter-spacing:-0.500px;line-height:14px;height:14px;color:#4a4a4a;">3910</div>
<div class="t" style="left:552.71px;top:371.90px;font-size:11.5px;letter-spacing:-0.500px;line-height:14px;height:14px;color:#4a4a4a;">3985</div>
<div class="a" style="left:607px;top:367.0px;width:105px;height:23px;background:#fdd62c;"></div>
<div class="t" style="left:652.26px;top:371.90px;font-size:11.5px;letter-spacing:-0.500px;line-height:14px;height:14px;color:#4a4a4a;">6,9</div>
<div class="t" style="left:746.76px;top:371.90px;font-size:11.5px;letter-spacing:-0.500px;line-height:14px;height:14px;color:#4a4a4a;">6,7</div>
<div class="a" style="left:794px;top:366.0px;width:1px;height:26px;background:#a8a8a8;"></div>
<div class="a" style="left:876px;top:366.0px;width:1px;height:26px;background:#a8a8a8;"></div>
<div class="a" style="left:800.90px;top:368.30px;width:20.80px;height:20.80px;border-radius:50%;background:#feffe6;border:1px solid #555"></div>
<div class="a" style="left:825.35px;top:368.30px;width:20.80px;height:20.80px;border-radius:50%;background:#fdd835;border:1px solid #7a6a2a"></div>
<div class="a" style="left:849.80px;top:368.30px;width:20.80px;height:20.80px;border-radius:50%;background:#feffe6;border:1px solid #555"></div>
<div class="a" style="left:877px;top:366.0px;width:64px;height:25px;background:#99ccff;"></div>
<div class="a" style="left:418px;top:366.0px;width:1px;height:25px;background:#ababab;"></div>
<div class="a" style="left:523px;top:366.0px;width:1px;height:25px;background:#ababab;"></div>
<div class="a" style="left:605px;top:366.0px;width:1px;height:25px;background:#ababab;"></div>
<div class="a" style="left:713px;top:366.0px;width:1px;height:25px;background:#ababab;"></div>
<div class="a" style="left:207px;top:417.0px;width:670px;height:1px;background:#a8a8a8;"></div>
<div class="t" style="left:209.30px;top:397.90px;font-size:11.5px;letter-spacing:-0.351px;line-height:14px;height:14px;color:#4a4a4a;">RLT Anlage 50 (2)</div>
<div class="a" style="left:420px;top:393.0px;width:102px;height:23px;background:#fdd62c;"></div>
<div class="t" style="left:456.26px;top:397.90px;font-size:11.5px;letter-spacing:-0.500px;line-height:14px;height:14px;color:#4a4a4a;">24520</div>
<div class="t" style="left:549.76px;top:397.90px;font-size:11.5px;letter-spacing:-0.500px;line-height:14px;height:14px;color:#4a4a4a;">21301</div>
<div class="a" style="left:607px;top:393.0px;width:105px;height:23px;background:#b52025;"></div>
<div class="t" style="left:652.26px;top:397.90px;font-size:11.5px;letter-spacing:-0.500px;line-height:14px;height:14px;color:#a46262;">9,8</div>
<div class="t" style="left:746.76px;top:397.90px;font-size:11.5px;letter-spacing:-0.500px;line-height:14px;height:14px;color:#4a4a4a;">6,7</div>
<div class="a" style="left:794px;top:392.0px;width:1px;height:26px;background:#a8a8a8;"></div>
<div class="a" style="left:876px;top:392.0px;width:1px;height:26px;background:#a8a8a8;"></div>
<div class="a" style="left:800.90px;top:394.30px;width:20.80px;height:20.80px;border-radius:50%;background:#fff;border:1px solid #555"></div>
<div class="a" style="left:825.35px;top:394.30px;width:20.80px;height:20.80px;border-radius:50%;background:#fff;border:1px solid #555"></div>
<div class="a" style="left:849.80px;top:394.30px;width:20.80px;height:20.80px;border-radius:50%;background:#b52025;border:1px solid #6a2020"></div>
<div class="a" style="left:877px;top:417.0px;width:65px;height:1px;background:#ececec;"></div>
<div class="a" style="left:418px;top:392.0px;width:1px;height:25px;background:#ababab;"></div>
<div class="a" style="left:523px;top:392.0px;width:1px;height:25px;background:#ababab;"></div>
<div class="a" style="left:605px;top:392.0px;width:1px;height:25px;background:#ababab;"></div>
<div class="a" style="left:713px;top:392.0px;width:1px;height:25px;background:#ababab;"></div>
<div class="a" style="left:200px;top:566px;width:786px;height:2px;background:#fefefe;"></div>
<div class="a" style="left:201px;top:572px;width:786px;height:150px;background:#f9f9f9;border:1px solid #dcdcdc;border-right:1px solid #8a8a8a;"></div>
<div class="a" style="left:206px;top:571px;width:80px;height:3px;background:#f9f9f9;"></div>
<div class="t" style="left:208.50px;top:565.90px;font-size:11.5px;letter-spacing:-0.327px;line-height:14px;height:14px;">Kälte-Anlage(n)</div>
<div class="a" style="left:206px;top:584px;width:775px;height:140px;background:#fff;border:1px solid #e6e6e6;border-right:1px solid #dcdcdc;"></div>
<div class="t" style="left:209.50px;top:591.55px;font-size:11.5px;letter-spacing:-1.044px;line-height:14px;height:14px;color:#4a4a4a;">Name</div>
<div class="t" style="left:448.25px;top:591.55px;font-size:11.5px;letter-spacing:-0.510px;line-height:14px;height:14px;color:#4a4a4a;">EER/zeta</div>
<div class="t" style="left:532.00px;top:591.55px;font-size:11.5px;letter-spacing:-0.595px;line-height:14px;height:14px;color:#4a4a4a;">Referenz-EER</div>
<div class="t" style="left:614.75px;top:591.55px;font-size:11.5px;letter-spacing:-0.287px;line-height:14px;height:14px;color:#4a4a4a;">Effizienz-Kennwert</div>
<div class="t" style="left:729.25px;top:591.55px;font-size:11.5px;letter-spacing:-0.536px;line-height:14px;height:14px;color:#4a4a4a;">Ref.-E_KK</div>
<div class="a" style="left:417px;top:584.5px;width:1px;height:131.5px;background:#e4e4e4;"></div>
<div class="a" style="left:523px;top:584.5px;width:1px;height:131.5px;background:#e4e4e4;"></div>
<div class="a" style="left:607px;top:584.5px;width:1px;height:131.5px;background:#e4e4e4;"></div>
<div class="a" style="left:712px;top:584.5px;width:1px;height:131.5px;background:#e4e4e4;"></div>
<div class="a" style="left:795px;top:584.5px;width:1px;height:131.5px;background:#e4e4e4;"></div>
<div class="a" style="left:874px;top:584.5px;width:1px;height:131.5px;background:#e4e4e4;"></div>
<div class="a" style="left:939px;top:584.5px;width:1px;height:131.5px;background:#e4e4e4;"></div>
<div class="a" style="left:208.6px;top:613.0px;width:730.4px;height:24px;background:#feffe6;"></div>
<div class="a" style="left:207px;top:637.0px;width:668px;height:1px;background:#a8a8a8;"></div>
<div class="t" style="left:209.30px;top:617.90px;font-size:11.5px;letter-spacing:-0.451px;line-height:14px;height:14px;color:#4a4a4a;">Kältemaschine (1)</div>
<div class="a" style="left:419px;top:613.0px;width:103px;height:23px;background:#a6d22e;"></div>
<div class="t" style="left:460.31px;top:617.90px;font-size:11.5px;letter-spacing:-0.500px;line-height:14px;height:14px;color:#4a4a4a;">4,50</div>
<div class="t" style="left:555.31px;top:617.90px;font-size:11.5px;letter-spacing:-0.500px;line-height:14px;height:14px;color:#4a4a4a;">3,30</div>
<div class="a" style="left:609px;top:613.0px;width:102px;height:23px;background:#a6d22e;"></div>
<div class="t" style="left:652.76px;top:617.90px;font-size:11.5px;letter-spacing:-0.500px;line-height:14px;height:14px;color:#4a4a4a;">4,1</div>
<div class="t" style="left:746.76px;top:617.90px;font-size:11.5px;letter-spacing:-0.500px;line-height:14px;height:14px;color:#4a4a4a;">2,9</div>
<div class="a" style="left:795px;top:612.0px;width:1px;height:26px;background:#a8a8a8;"></div>
<div class="a" style="left:874px;top:612.0px;width:1px;height:26px;background:#a8a8a8;"></div>
<div class="a" style="left:800.90px;top:614.30px;width:20.80px;height:20.80px;border-radius:50%;background:#a3bf00;border:1px solid #5f6f14"></div>
<div class="a" style="left:825.35px;top:614.30px;width:20.80px;height:20.80px;border-radius:50%;background:#feffe6;border:1px solid #555"></div>
<div class="a" style="left:849.80px;top:614.30px;width:20.80px;height:20.80px;border-radius:50%;background:#feffe6;border:1px solid #555"></div>
<div class="a" style="left:875px;top:612.0px;width:64px;height:25px;background:#99ccff;"></div>
<div class="a" style="left:417px;top:612.0px;width:1px;height:25px;background:#ababab;"></div>
<div class="a" style="left:523px;top:612.0px;width:1px;height:25px;background:#ababab;"></div>
<div class="a" style="left:607px;top:612.0px;width:1px;height:25px;background:#ababab;"></div>
<div class="a" style="left:712px;top:612.0px;width:1px;height:25px;background:#ababab;"></div>
<div class="a" style="left:207px;top:663.0px;width:668px;height:1px;background:#a8a8a8;"></div>
<div class="t" style="left:209.30px;top:643.90px;font-size:11.5px;letter-spacing:-0.441px;line-height:14px;height:14px;color:#4a4a4a;">Wärmepumpe 1 (4)</div>
<div class="a" style="left:419px;top:639.0px;width:103px;height:23px;background:#a6d22e;"></div>
<div class="t" style="left:460.31px;top:643.90px;font-size:11.5px;letter-spacing:-0.500px;line-height:14px;height:14px;color:#4a4a4a;">4,41</div>
<div class="t" style="left:555.31px;top:643.90px;font-size:11.5px;letter-spacing:-0.500px;line-height:14px;height:14px;color:#4a4a4a;">3,30</div>
<div class="a" style="left:609px;top:639.0px;width:102px;height:23px;background:#a6d22e;"></div>
<div class="t" style="left:652.76px;top:643.90px;font-size:11.5px;letter-spacing:-0.500px;line-height:14px;height:14px;color:#4a4a4a;">3,9</div>
<div class="t" style="left:746.76px;top:643.90px;font-size:11.5px;letter-spacing:-0.500px;line-height:14px;height:14px;color:#4a4a4a;">2,8</div>
<div class="a" style="left:795px;top:638.0px;width:1px;height:26px;background:#a8a8a8;"></div>
<div class="a" style="left:874px;top:638.0px;width:1px;height:26px;background:#a8a8a8;"></div>
<div class="a" style="left:800.90px;top:640.30px;width:20.80px;height:20.80px;border-radius:50%;background:#a3bf00;border:1px solid #5f6f14"></div>
<div class="a" style="left:825.35px;top:640.30px;width:20.80px;height:20.80px;border-radius:50%;background:#fff;border:1px solid #555"></div>
<div class="a" style="left:849.80px;top:640.30px;width:20.80px;height:20.80px;border-radius:50%;background:#fff;border:1px solid #555"></div>
<div class="a" style="left:875px;top:663.0px;width:65px;height:1px;background:#ececec;"></div>
<div class="a" style="left:417px;top:638.0px;width:1px;height:25px;background:#ababab;"></div>
<div class="a" style="left:523px;top:638.0px;width:1px;height:25px;background:#ababab;"></div>
<div class="a" style="left:607px;top:638.0px;width:1px;height:25px;background:#ababab;"></div>
<div class="a" style="left:712px;top:638.0px;width:1px;height:25px;background:#ababab;"></div>
<div class="a" style="left:208.6px;top:665.0px;width:730.4px;height:24px;background:#feffe6;"></div>
<div class="a" style="left:207px;top:689.0px;width:668px;height:1px;background:#a8a8a8;"></div>
<div class="t" style="left:209.30px;top:669.90px;font-size:11.5px;letter-spacing:-0.441px;line-height:14px;height:14px;color:#4a4a4a;">Wärmepumpe 2 (5)</div>
<div class="a" style="left:419px;top:665.0px;width:103px;height:23px;background:#a6d22e;"></div>
<div class="t" style="left:460.31px;top:669.90px;font-size:11.5px;letter-spacing:-0.500px;line-height:14px;height:14px;color:#4a4a4a;">4,30</div>
<div class="t" style="left:555.31px;top:669.90px;font-size:11.5px;letter-spacing:-0.500px;line-height:14px;height:14px;color:#4a4a4a;">3,30</div>
<div class="a" style="left:609px;top:665.0px;width:102px;height:23px;background:#a6d22e;"></div>
<div class="t" style="left:652.76px;top:669.90px;font-size:11.5px;letter-spacing:-0.500px;line-height:14px;height:14px;color:#4a4a4a;">3,9</div>
<div class="t" style="left:746.76px;top:669.90px;font-size:11.5px;letter-spacing:-0.500px;line-height:14px;height:14px;color:#4a4a4a;">2,9</div>
<div class="a" style="left:795px;top:664.0px;width:1px;height:26px;background:#a8a8a8;"></div>
<div class="a" style="left:874px;top:664.0px;width:1px;height:26px;background:#a8a8a8;"></div>
<div class="a" style="left:800.90px;top:666.30px;width:20.80px;height:20.80px;border-radius:50%;background:#a3bf00;border:1px solid #5f6f14"></div>
<div class="a" style="left:825.35px;top:666.30px;width:20.80px;height:20.80px;border-radius:50%;background:#feffe6;border:1px solid #555"></div>
<div class="a" style="left:849.80px;top:666.30px;width:20.80px;height:20.80px;border-radius:50%;background:#feffe6;border:1px solid #555"></div>
<div class="a" style="left:875px;top:689.0px;width:65px;height:1px;background:#ececec;"></div>
<div class="a" style="left:417px;top:664.0px;width:1px;height:25px;background:#ababab;"></div>
<div class="a" style="left:523px;top:664.0px;width:1px;height:25px;background:#ababab;"></div>
<div class="a" style="left:607px;top:664.0px;width:1px;height:25px;background:#ababab;"></div>
<div class="a" style="left:712px;top:664.0px;width:1px;height:25px;background:#ababab;"></div>
<div class="a" style="left:207px;top:715.0px;width:668px;height:1px;background:#a8a8a8;"></div>
<div class="t" style="left:209.30px;top:695.90px;font-size:11.5px;letter-spacing:-0.441px;line-height:14px;height:14px;color:#4a4a4a;">Wärmepumpe 3 (6)</div>
<div class="a" style="left:419px;top:691.0px;width:103px;height:23px;background:#a6d22e;"></div>
<div class="t" style="left:460.31px;top:695.90px;font-size:11.5px;letter-spacing:-0.500px;line-height:14px;height:14px;color:#4a4a4a;">4,41</div>
<div class="t" style="left:555.31px;top:695.90px;font-size:11.5px;letter-spacing:-0.500px;line-height:14px;height:14px;color:#4a4a4a;">3,30</div>
<div class="a" style="left:609px;top:691.0px;width:102px;height:23px;background:#a6d22e;"></div>
<div class="t" style="left:652.76px;top:695.90px;font-size:11.5px;letter-spacing:-0.500px;line-height:14px;height:14px;color:#4a4a4a;">4,0</div>
<div class="t" style="left:746.76px;top:695.90px;font-size:11.5px;letter-spacing:-0.500px;line-height:14px;height:14px;color:#4a4a4a;">2,9</div>
<div class="a" style="left:795px;top:690.0px;width:1px;height:26px;background:#a8a8a8;"></div>
<div class="a" style="left:874px;top:690.0px;width:1px;height:26px;background:#a8a8a8;"></div>
<div class="a" style="left:800.90px;top:692.30px;width:20.80px;height:20.80px;border-radius:50%;background:#a3bf00;border:1px solid #5f6f14"></div>
<div class="a" style="left:825.35px;top:692.30px;width:20.80px;height:20.80px;border-radius:50%;background:#fff;border:1px solid #555"></div>
<div class="a" style="left:849.80px;top:692.30px;width:20.80px;height:20.80px;border-radius:50%;background:#fff;border:1px solid #555"></div>
<div class="a" style="left:875px;top:715.0px;width:65px;height:1px;background:#ececec;"></div>
<div class="a" style="left:417px;top:690.0px;width:1px;height:25px;background:#ababab;"></div>
<div class="a" style="left:523px;top:690.0px;width:1px;height:25px;background:#ababab;"></div>
<div class="a" style="left:607px;top:690.0px;width:1px;height:25px;background:#ababab;"></div>
<div class="a" style="left:712px;top:690.0px;width:1px;height:25px;background:#ababab;"></div>
<div class="a" style="left:986px;top:319px;width:1.5px;height:394px;background:#8c8c8c;"></div>
<div class="a" style="left:1027px;top:100px;width:19px;height:616px;background:#f0f0f0;"></div>
<div class="a" style="left:1034.5px;top:112px;width:2px;height:496px;background:#707070;"></div>
<div class="a" style="left:1047.3px;top:76px;width:194.2px;height:20px;background:#fff;border:1px solid #e9e9e9;border-top:none;"></div>
<div class="t" style="left:1050.60px;top:79.70px;font-size:11.5px;letter-spacing:-0.183px;line-height:14px;height:14px;">Ist-Zustand</div>
<svg class="a" style="left:1228px;top:83.6px" width="10" height="7" viewBox="0 0 10 7"><path d="M0.6 0.8 L5 5.2 L9.4 0.8" fill="none" stroke="#444" stroke-width="1.1"/></svg>
<div class="a" style="left:1243px;top:76.2px;width:21px;height:20.6px;background:#a6d22e;border:1.5px solid #1a6fc4;border-radius:3.5px;box-shadow:inset 1.5px 1.5px 0 #cfe6f7, inset -1px -1px 0 #cfe6f7;"></div>
<div class="t" style="left:1248.00px;top:78.20px;font-size:16.2px;letter-spacing:0.000px;line-height:18px;height:18px;color:#fff;">A</div>
<div class="a" style="left:1252px;top:97px;width:15px;height:593px;background:#fafafa;"></div>
<div class="a" style="left:1255px;top:115px;width:9px;height:452px;background:#8a8a8a;border-radius:4.5px;"></div>
<svg class="a" style="left:1255px;top:102px" width="9" height="7" viewBox="0 0 9 7"><path d="M0.8 6 L4.5 0.8 L8.2 6 Z" fill="#8a8a8a" stroke="#8a8a8a" stroke-width="1.4" stroke-linejoin="round"/></svg>
<svg class="a" style="left:1255px;top:679px" width="9" height="7" viewBox="0 0 9 7"><path d="M0.8 1 L4.5 6.2 L8.2 1 Z" fill="#8a8a8a" stroke="#8a8a8a" stroke-width="1.4" stroke-linejoin="round"/></svg>
<div class="a" style="left:1047px;top:96.4px;width:205px;height:1px;background:#727272;"></div>
<div class="a" style="left:1047px;top:97px;width:205px;height:593px;overflow:hidden;background:#727272">
<div class="a" style="left:2px;top:2px;width:201.3px;height:334px;background:#fff;"></div>
<div class="a" style="left:2px;top:340px;width:201.3px;height:103px;background:#fff;"></div>
<div class="a" style="left:2px;top:447px;width:201.3px;height:69px;background:#fff;"></div>
<div class="a" style="left:2px;top:520.5px;width:201.3px;height:82.5px;background:#fff;"></div>
<div class="t" style="left:10.60px;top:9.97px;font-size:17.4px;letter-spacing:0.011px;line-height:20px;height:20px;color:#1a1a1a;">GEG 2024</div>
<div class="t" style="left:10.80px;top:29.35px;font-size:13px;letter-spacing:0.025px;line-height:16px;height:16px;color:#1a1a1a;">DIN V 18599</div>
<div class="t" style="left:10.80px;top:346.97px;font-size:17.4px;letter-spacing:-0.038px;line-height:20px;height:20px;color:#1a1a1a;">Erneuerbare</div>
<div class="t" style="left:10.80px;top:367.27px;font-size:17.4px;letter-spacing:-0.018px;line-height:20px;height:20px;color:#1a1a1a;">Energien</div>
<div class="t" style="left:10.50px;top:455.07px;font-size:17.4px;letter-spacing:0.057px;line-height:20px;height:20px;color:#1a1a1a;">Sommerlicher</div>
<div class="t" style="left:10.50px;top:476.17px;font-size:17.4px;letter-spacing:0.059px;line-height:20px;height:20px;color:#1a1a1a;">Wärmeschutz</div>
<div class="t" style="left:10.80px;top:496.15px;font-size:13px;letter-spacing:0.003px;line-height:16px;height:16px;color:#1a1a1a;">DIN 4108-2</div>
<div class="t" style="left:10.50px;top:528.17px;font-size:17.4px;letter-spacing:0.008px;line-height:20px;height:20px;color:#1a1a1a;">Lüftungskonzept</div>
<div class="t" style="left:10.80px;top:547.65px;font-size:13px;letter-spacing:0.003px;line-height:16px;height:16px;color:#1a1a1a;">DIN 1946-6</div>
<div class="a" style="left:172.00px;top:12.80px;width:18px;height:18px;border-radius:50%;background:#7fae22;"></div>
<div class="a" style="left:172.00px;top:350.60px;width:18px;height:18px;border-radius:50%;background:#7fae22;"></div>
<div class="a" style="left:171.80px;top:457.60px;width:18.4px;height:18.4px;border-radius:50%;background:#fff;border:1.5px solid #111;"></div>
<div class="a" style="left:171.80px;top:531.40px;width:18.4px;height:18.4px;border-radius:50%;background:#fdd835;border:1.2px solid #e8a33a;"></div>
<div class="a" style="left:16.4px;top:51px;width:170px;height:131.5px;background:#fff;box-shadow:0.5px 1px 2px rgba(0,0,0,.45);"></div>
<div class="a" style="left:16.4px;top:51px;width:13.7px;height:131.5px;background:#d4d4d4;"></div>
<div class="a" style="left:33px;top:51px;width:153.4px;height:131.5px;background:#ced436;"></div>
<div class="t" style="left:23.40px;top:116.00px;font-size:8.4px;letter-spacing:0.02px;line-height:10px;height:10px;color:#111;transform:translate(-50%,-50%) rotate(-90deg);">Effizienzklasse</div>
<svg class="a" style="left:58px;top:58px;filter:drop-shadow(0 0.6px 1px rgba(0,0,0,.45))" width="105" height="110" viewBox="0 0 105 110"><path d="M88.1 37.4 C84.5 20.5 74.5 8.5 52.5 8.5 C30.2 8.5 14.1 27.8 14.1 54.5 C14.1 81.3 30.2 100.7 52.5 100.7 C75 100.7 87.5 86 89.9 65.3 L77.6 65.3 C75.5 80 66 89.2 52.5 89.2 C37.2 89.2 26.1 74.6 26.1 54.5 C26.1 34.0 37.2 19.2 52.5 19.2 C65 19.2 73.5 26.5 76.1 37.4 Z" fill="#fff"/></svg>
<div class="t" style="left:83.20px;top:161.60px;font-size:13.2px;letter-spacing:0.000px;line-height:16px;height:16px;color:#fff;text-shadow:0 1px 1.5px rgba(0,0,0,.45);"><b>89,5</b> kWh/(m²a)</div>
<div class="a" style="left:16.4px;top:188.5px;width:170px;height:50.0px;background:#fff;box-shadow:0.5px 1px 2px rgba(0,0,0,.45);"></div>
<div class="a" style="left:16.4px;top:188.5px;width:13.7px;height:50.0px;background:#d4d4d4;"></div>
<div class="t" style="left:22.60px;top:213.50px;font-size:10px;letter-spacing:0px;line-height:10px;height:10px;color:#111;transform:translate(-50%,-50%) rotate(-90deg);">Q<span style="font-size:7.6px;position:relative;top:2px;margin-left:1.5px">P</span></div>
<div class="a" style="left:33.3px;top:189px;width:91.4px;height:16px;background:#d4d4d4;"></div>
<div class="t" style="left:38.30px;top:192.10px;font-size:8.8px;letter-spacing:-0.030px;line-height:10px;height:10px;color:#000;-webkit-text-stroke:0.15px #000;">208,7 kWh/(m²a)</div>
<div class="a" style="left:33.3px;top:206.1px;width:128.4px;height:15.5px;background:#4a7fb5;"></div>
<div class="t" style="left:38.30px;top:208.95px;font-size:8.8px;letter-spacing:-0.030px;line-height:10px;height:10px;color:#000;-webkit-text-stroke:0.15px #000;">292,2 kWh/(m²a)</div>
<div class="a" style="left:33.3px;top:222.3px;width:64.3px;height:16.2px;background:linear-gradient(90deg,#55901a 0%,#9cc42a 50%,#e6e23a 88%,#fbe33a 97%,#fff 100%);"></div>
<div class="t" style="left:38.30px;top:225.50px;font-size:8.8px;letter-spacing:-0.030px;line-height:10px;height:10px;color:#000;-webkit-text-stroke:0.15px #000;">144,7 kWh/(m²a)</div>
<div class="a" style="left:16.4px;top:244.7px;width:170px;height:49.69999999999999px;background:#fff;box-shadow:0.5px 1px 2px rgba(0,0,0,.45);"></div>
<div class="a" style="left:16.4px;top:244.7px;width:13.7px;height:49.69999999999999px;background:#d4d4d4;"></div>
<div class="t" style="left:22.20px;top:269.55px;font-size:9.2px;letter-spacing:0.5px;line-height:10px;height:10px;color:#111;transform:translate(-50%,-50%) rotate(-90deg);">HT</div>
<div class="a" style="left:33.3px;top:245.4px;width:77.7px;height:14.4px;background:#d4d4d4;"></div>
<div class="t" style="left:38.30px;top:247.70px;font-size:8.8px;letter-spacing:-0.030px;line-height:10px;height:10px;color:#000;-webkit-text-stroke:0.15px #000;">1,35 W/(m²K)</div>
<div class="a" style="left:33.3px;top:261.9px;width:108.7px;height:14.7px;background:#4a7fb5;"></div>
<div class="t" style="left:38.30px;top:264.35px;font-size:8.8px;letter-spacing:-0.030px;line-height:10px;height:10px;color:#000;-webkit-text-stroke:0.15px #000;">1,89 W/(m²K)</div>
<div class="a" style="left:33.3px;top:278.5px;width:92.2px;height:15.9px;background:linear-gradient(90deg,#55901a 0%,#9cc42a 35%,#f3de36 72%,#f9d035 85%,#f2a533 100%);"></div>
<div class="t" style="left:38.30px;top:281.55px;font-size:8.8px;letter-spacing:-0.030px;line-height:10px;height:10px;color:#000;-webkit-text-stroke:0.15px #000;">1,60 W/(m²K)</div>
<div class="a" style="left:16.4px;top:301.7px;width:170px;height:17.30000000000001px;background:#fff;box-shadow:0.5px 1px 2px rgba(0,0,0,.45);"></div>
<div class="a" style="left:16.4px;top:301.7px;width:13.7px;height:17.30000000000001px;background:#d4d4d4;"></div>
<div class="t" style="left:22.20px;top:310.35px;font-size:9.2px;letter-spacing:0.5px;line-height:10px;height:10px;color:#111;transform:translate(-50%,-50%) rotate(-90deg);">EH</div>
<div class="a" style="left:33.3px;top:302.6px;width:150.8px;height:16.4px;background:#b52a25;"></div>
<div class="a" style="left:67.4px;top:302.6px;width:1.3px;height:16.4px;background:#fff;"></div>
<div class="a" style="left:82.4px;top:302.6px;width:1.3px;height:16.4px;background:#fff;"></div>
<div class="a" style="left:96.4px;top:302.6px;width:1.3px;height:16.4px;background:#fff;"></div>
<div class="t" style="left:56.94px;top:306.00px;font-size:8.6px;letter-spacing:0.000px;line-height:10px;height:10px;font-weight:bold;color:#fff;">40</div>
<div class="t" style="left:72.04px;top:306.00px;font-size:8.6px;letter-spacing:0.000px;line-height:10px;height:10px;font-weight:bold;color:#fff;">55</div>
<div class="t" style="left:86.24px;top:306.00px;font-size:8.6px;letter-spacing:0.000px;line-height:10px;height:10px;font-weight:bold;color:#fff;">70</div>
<div class="t" style="left:168.95px;top:306.00px;font-size:8.6px;letter-spacing:0.000px;line-height:10px;height:10px;font-weight:bold;color:#fff;">160</div>
<div class="a" style="left:16.4px;top:393px;width:170px;height:33px;background:#fff;box-shadow:0.5px 1px 2px rgba(0,0,0,.45);"></div>
<div class="a" style="left:16.4px;top:393px;width:13.7px;height:33px;background:#d4d4d4;"></div>
<div class="t" style="left:22.20px;top:409.50px;font-size:9.2px;letter-spacing:0.5px;line-height:10px;height:10px;color:#111;transform:translate(-50%,-50%) rotate(-90deg);">EE</div>
<div class="a" style="left:33.3px;top:393.3px;width:99.4px;height:16.0px;background:#d4d4d4;"></div>
<div class="t" style="left:38.30px;top:396.40px;font-size:8.8px;letter-spacing:-0.030px;line-height:10px;height:10px;color:#000;-webkit-text-stroke:0.15px #000;">65 %</div>
<div class="a" style="left:33.3px;top:410.2px;width:137.5px;height:15.8px;background:linear-gradient(90deg,#b7281f 0%,#e8862a 25%,#fbdc35 55%,#b5d030 80%,#68a51e 100%);"></div>
<div class="t" style="left:38.30px;top:413.20px;font-size:8.8px;letter-spacing:-0.030px;line-height:10px;height:10px;color:#000;-webkit-text-stroke:0.15px #000;">90 %</div>
<div class="a" style="left:16.4px;top:569.4px;width:170px;height:33.60000000000002px;background:#fff;box-shadow:0.5px 1px 2px rgba(0,0,0,.45);"></div>
<div class="a" style="left:16.4px;top:569.4px;width:13.7px;height:33.60000000000002px;background:#d4d4d4;"></div>
<div class="t" style="left:23.60px;top:582.50px;font-size:8.8px;letter-spacing:0px;line-height:10px;height:10px;color:#111;font-weight:bold;transform:translate(-50%,-50%) rotate(-90deg);">d min</div>
<div class="a" style="left:33.3px;top:570.3px;width:76.5px;height:14.7px;background:#d4d4d4;"></div>
<div class="t" style="left:38.30px;top:572.75px;font-size:8.8px;letter-spacing:-0.030px;line-height:10px;height:10px;color:#000;-webkit-text-stroke:0.15px #000;">340 m³/h</div>
<div class="a" style="left:33.3px;top:586.3px;width:132.7px;height:14.7px;background:linear-gradient(90deg,#4a82bb 0%,#7fb0de 55%,#b8d8f4 100%);"></div>
<div class="t" style="left:38.30px;top:588.75px;font-size:8.8px;letter-spacing:-0.030px;line-height:10px;height:10px;color:#000;-webkit-text-stroke:0.15px #000;">592 m³/h</div>
</div>
<div class="a" style="left:1027px;top:690px;width:242px;height:26px;background:#efefef;"></div>
<div class="a" style="left:190px;top:712.6px;width:856px;height:4px;background:#9a9a9a;"></div>
<div class="a" style="left:0px;top:0px;width:1268.6px;height:714.4px;border:1px solid #a4a4a4;border-radius:7px;box-shadow:0 0 0 1px #b4b4b4,0 0 0 9px #c6c6c6;"></div>
</body></html>
